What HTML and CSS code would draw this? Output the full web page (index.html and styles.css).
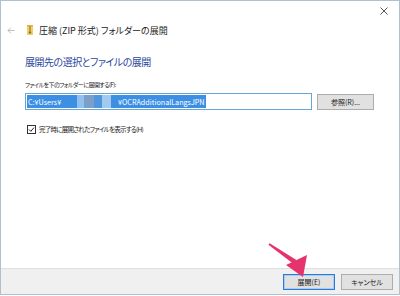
FILE: index.html
```html
<!DOCTYPE html>
<html>
<head>
<meta charset="utf-8">
<link rel="stylesheet" href="styles.css">
</head>
<body>
<div class="window">
  <div class="titlebar">
    <svg class="close" width="8" height="8" viewBox="0 0 8 8"><path d="M0.5 0.5L7.5 7.5M7.5 0.5L0.5 7.5" stroke="#444" stroke-width="0.9"/></svg>
  </div>
  <div class="nav">
    <svg class="back" width="8" height="7" viewBox="0 0 8 7"><path d="M7.5 3.5H1M3.8 0.7L1 3.5L3.8 6.3" fill="none" stroke="#b4b4b4" stroke-width="0.9"/></svg>
    <svg class="zip" width="6" height="10" viewBox="0 0 6 10"><rect x="0" y="0" width="6" height="10" fill="#f1d166"/><rect x="0" y="0" width="6" height="1.5" fill="#ddb444"/><rect x="2.5" y="1" width="1" height="5.5" fill="#8c6c22"/><rect x="1.8" y="6.5" width="2.4" height="2" fill="#8c6c22"/></svg>
    <span class="title">圧縮 (ZIP 形式) フォルダーの展開</span>
  </div>
  <div class="content">
    <h1 class="heading">展開先の選択とファイルの展開</h1>
    <div class="label">ファイルを下のフォルダーに展開する(F):</div>
    <div class="pathrow">
      <div class="input"><span class="sel"><span class="user">C:¥Users¥</span><span class="blk g1"></span><span class="blk b1"></span><span class="blk b2"></span><span class="blk b3"></span><span class="blk b4"></span><span class="blk g2"></span><span class="rest">¥OCRAdditionalLangsJPN</span></span></div>
      <div class="btn browse">参照(R)...</div>
    </div>
    <div class="check">
      <svg class="box" width="9" height="9" viewBox="0 0 9 9"><rect x="0.5" y="0.5" width="8" height="8" fill="#fff" stroke="#333"/><path d="M2 4.5L3.8 6.3L7 2.6" fill="none" stroke="#222" stroke-width="1"/></svg>
      <span>完了時に展開されたファイルを表示する(H)</span>
    </div>
  </div>
  <div class="footer">
    <div class="btn default">展開(E)</div>
    <div class="btn">キャンセル</div>
  </div>
</div>
<svg class="arrow" width="400" height="296" viewBox="0 0 400 296"><polygon points="269.6,243.2 268.4,244.8 293.6,264 296.4,260" fill="#e6336e"/><polygon points="286,265 307,255 303,277" fill="#e6336e"/></svg>
</body>
</html>
```
FILE: styles.css
```css
html, body {
  margin: 0;
  padding: 0;
  background: #fff;
}
body {
  width: 400px;
  height: 296px;
  position: relative;
  overflow: hidden;
  font-family: "Noto Sans CJK JP", "Noto Sans", sans-serif;
  font-feature-settings: "palt" 1;
  color: #1a1a1a;
}
.window {
  box-sizing: border-box;
  width: 400px;
  height: 295px;
  border: 1px solid #afc1cf;
  display: flex;
  flex-direction: column;
  background: #fff;
}
.titlebar {
  height: 19px;
  display: flex;
  justify-content: flex-end;
  align-items: center;
  padding-right: 11px;
}
.nav {
  height: 20px;
  display: flex;
  align-items: center;
  padding-left: 6px;
}
.back { margin-right: 12px; }
.zip { margin-right: 6px; }
.title {
  font-size: 9px;
  color: #222;
}
.content {
  padding-left: 24px;
  padding-right: 25px;
  flex: 1;
}
.heading {
  margin: 14px 0 0 0;
  font-size: 10px;
  letter-spacing: -0.5px;
  line-height: 16px;
  font-weight: normal;
  color: #2a479e;
}
.label {
  margin-top: 9px;
  font-size: 6px;
  letter-spacing: -0.55px;
  line-height: 12px;
}
.pathrow {
  margin-top: 2px;
  display: flex;
  align-items: center;
  gap: 5px;
}
.input {
  box-sizing: border-box;
  width: 287px;
  height: 17px;
  border: 1px solid #64a6d6;
  display: flex;
  align-items: center;
  padding-left: 1px;
}
.sel {
  display: flex;
  align-items: center;
  height: 13px;
  background: #3d8fe4;
  color: #fff;
  font-size: 7.2px;
  padding: 0 1px;
  white-space: nowrap;
}
.user { display: inline-block; width: 32px; }
.blk { display: inline-block; height: 13px; }
.g1 { width: 17px; }
.b1 { width: 7px; background: #93c1ee; }
.b2 { width: 10px; background: #7d9ec6; }
.b3 { width: 8px; background: #4f96e0; }
.b4 { width: 9px; background: #a2caf0; }
.g2 { width: 7px; }
.btn {
  box-sizing: border-box;
  height: 16px;
  width: 52px;
  border: 1px solid #adadad;
  background: #e1e1e1;
  font-size: 7px;
  display: flex;
  align-items: center;
  justify-content: center;
}
.browse {
  width: 57px;
}
.check {
  margin-top: 13px;
  display: flex;
  align-items: center;
  gap: 3px;
  font-size: 6.5px;
  letter-spacing: -0.75px;
  line-height: 12px;
  padding-left: 2px;
}
.footer {
  height: 25px;
  background: #f0f0f0;
  border-top: 1px solid #dfdfdf;
  display: flex;
  justify-content: flex-end;
  align-items: center;
  gap: 6px;
  padding-right: 6px;
}
.default {
  border: 1px solid #2b7bd6;
  box-shadow: inset 0 0 0 1px #a6cdf2;
}
.arrow {
  position: absolute;
  left: 0;
  top: 0;
  pointer-events: none;
}
```
